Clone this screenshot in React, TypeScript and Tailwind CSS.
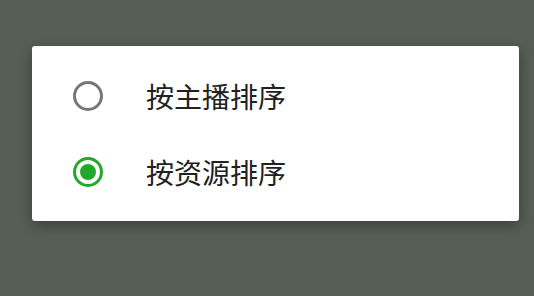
const options = [
  { label: '按主播排序', checked: false },
  { label: '按资源排序', checked: true },
]

function Radio({ checked }: { checked: boolean }) {
  return (
    <span
      className={`flex items-center justify-center w-[30px] h-[30px] rounded-full border-[3px] ${
        checked ? 'border-[#22a82a]' : 'border-[#777777]'
      }`}
    >
      {checked && <span className="w-[16px] h-[16px] rounded-full bg-[#22a82a]" />}
    </span>
  )
}

export default function App() {
  return (
    <div
      className="w-[534px] h-[296px] bg-[#555f54] pt-[46px] pl-[32px]"
      style={{ fontFamily: '"Noto Sans CJK SC", "Noto Sans", sans-serif' }}
    >
      <div className="w-[487px] bg-white rounded-[3px] pt-3 pb-[11px] shadow-[0_4px_14px_rgba(0,0,0,0.35)]">
        {options.map(opt => (
          <div key={opt.label} className="flex items-center h-[76px] pl-[41px]">
            <Radio checked={opt.checked} />
            <span className="ml-[43px] text-[28px] leading-none text-[#212121]">{opt.label}</span>
          </div>
        ))}
      </div>
    </div>
  )
}
